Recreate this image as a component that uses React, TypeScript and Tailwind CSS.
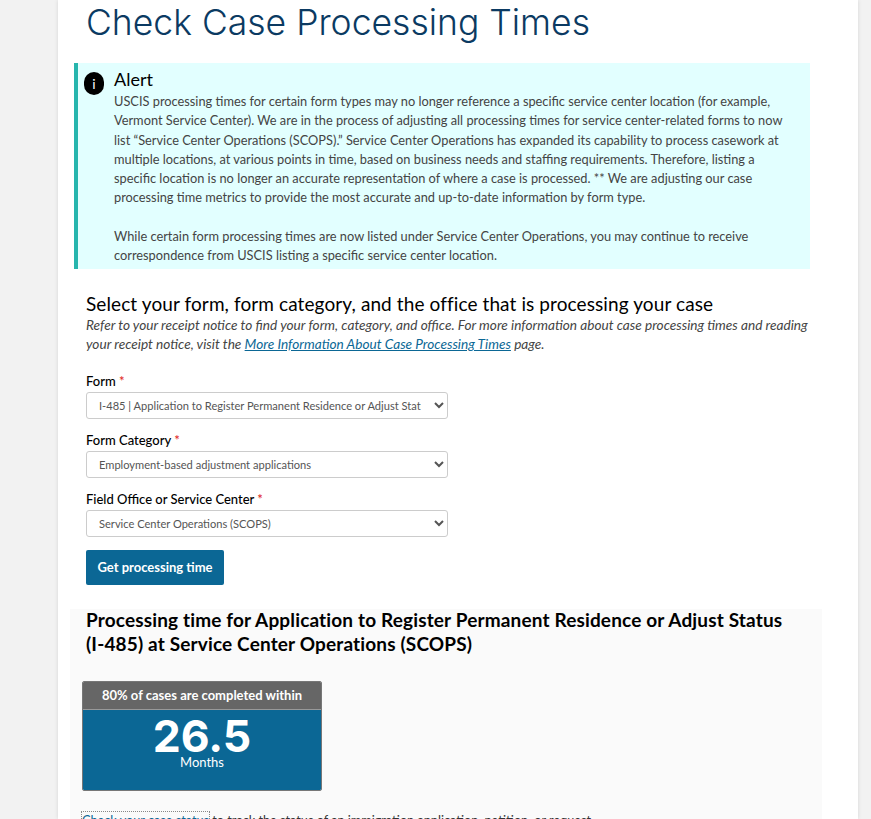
const FIELDS = [
  { label: 'Form', value: 'I-485 | Application to Register Permanent Residence or Adjust Status' },
  { label: 'Form Category', value: 'Employment-based adjustment applications' },
  { label: 'Field Office or Service Center', value: 'Service Center Operations (SCOPS)' },
];

function Field({ label, value }: { label: string; value: string }) {
  return (
    <div className="mb-[12px]">
      <label className="block h-[20px] text-[13px] leading-[19px] font-medium text-black">
        {label} <span className="text-[#e02020]">*</span>
      </label>
      <select
        defaultValue={value}
        className="block h-[27px] w-[362px] rounded-[3px] border border-[#ccc] bg-white pr-[10px] pl-[8px] text-[11.1px] text-[#555]"
      >
        <option>{value}</option>
      </select>
    </div>
  );
}

export default function App() {
  return (
    <div className="h-[819px] overflow-hidden bg-[#f2f2f2] font-['Lato','Liberation_Sans',sans-serif]">
      <div className="ml-[58px] h-full w-[800px] bg-white shadow-[0_0_4px_rgba(0,0,0,0.12)]">
        <h1 className="h-[45px] pl-[28px] font-['Inter',sans-serif] text-[35.5px] leading-[45px] font-light text-[#0b3a62]">
          Check Case Processing Times
        </h1>

        <div className="mt-[18px] ml-[16px] flex h-[206px] w-[736px] border-l-4 border-[#26b5ad] bg-[#e2ffff]">
          <div className="mt-[9px] ml-[6px] flex h-[23px] w-[20px] items-center justify-center rounded-full bg-black text-[14px] text-white">
            i
          </div>
          <div className="ml-[10px] pt-[5px]">
            <h2 className="mb-[2px] text-[18px] leading-[22px] text-black">Alert</h2>
            <p className="text-[12.8px] leading-[19.3px] text-[#444]">
              USCIS processing times for certain form types may no longer reference a specific service center location (for example,<br />
              Vermont Service Center). We are in the process of adjusting all processing times for service center-related forms to now<br />
              list “Service Center Operations (SCOPS).” Service Center Operations has expanded its capability to process casework at<br />
              multiple locations, at various points in time, based on business needs and staffing requirements. Therefore, listing a<br />
              specific location is no longer an accurate representation of where a case is processed. ** We are adjusting our case<br />
              processing time metrics to provide the most accurate and up-to-date information by form type.<br />
              <br />
              While certain form processing times are now listed under Service Center Operations, you may continue to receive<br />
              correspondence from USCIS listing a specific service center location.
            </p>
          </div>
        </div>

        <div className="pt-[24px] pl-[28px]">
          <h2 className="mb-[1px] text-[19px] leading-[22px] tracking-[0.1px] text-black">
            Select your form, form category, and the office that is processing your case
          </h2>
          <p className="text-[13.65px] leading-[19px] text-[#444] italic">
            Refer to your receipt notice to find your form, category, and office. For more information about case processing times and reading<br />
            your receipt notice, visit the{' '}
            <a className="text-[#0b6795] underline">More Information About Case Processing Times</a> page.
          </p>

          <div className="mt-[18px]">
            {FIELDS.map((f) => (
              <Field key={f.label} label={f.label} value={f.value} />
            ))}
          </div>

          <button className="mt-[1px] h-[35px] w-[138px] rounded-[2px] bg-[#0b6795] text-[13px] font-bold text-white">
            Get processing time
          </button>
        </div>

        <div className="mt-[24px] ml-[12px] flow-root h-[300px] w-[752px] bg-[#fafafa]">
          <h2 className="-mt-px pl-[16px] text-[19px] leading-[24px] font-bold tracking-[0.15px] text-black">
            Processing time for Application to Register Permanent Residence or Adjust Status<br />
            (I-485) at Service Center Operations (SCOPS)
          </h2>
          <div className="mt-[25px] ml-[12px] w-[240px] overflow-hidden rounded-[2px] border border-[#777] text-center text-white">
            <div className="h-[28px] border-b border-[#999] bg-[#666] text-[13px] leading-[27px] font-bold">
              80% of cases are completed within
            </div>
            <div className="h-[80px] bg-[#0b6795]">
              <div className="pt-[8px] font-['Inter',sans-serif] text-[44.5px] leading-[36px] font-bold">26.5</div>
              <div className="text-[13px] leading-[16px]">Months</div>
            </div>
          </div>
          <p className="mt-[20px] ml-[12px] text-[12.7px] leading-[19px] text-[#333]">
            <a className="text-[#0b6795] underline outline-1 outline-[#888] outline-dotted">Check your case status</a> to track the status of an immigration application, petition, or request.
          </p>
        </div>
      </div>
    </div>
  );
}
